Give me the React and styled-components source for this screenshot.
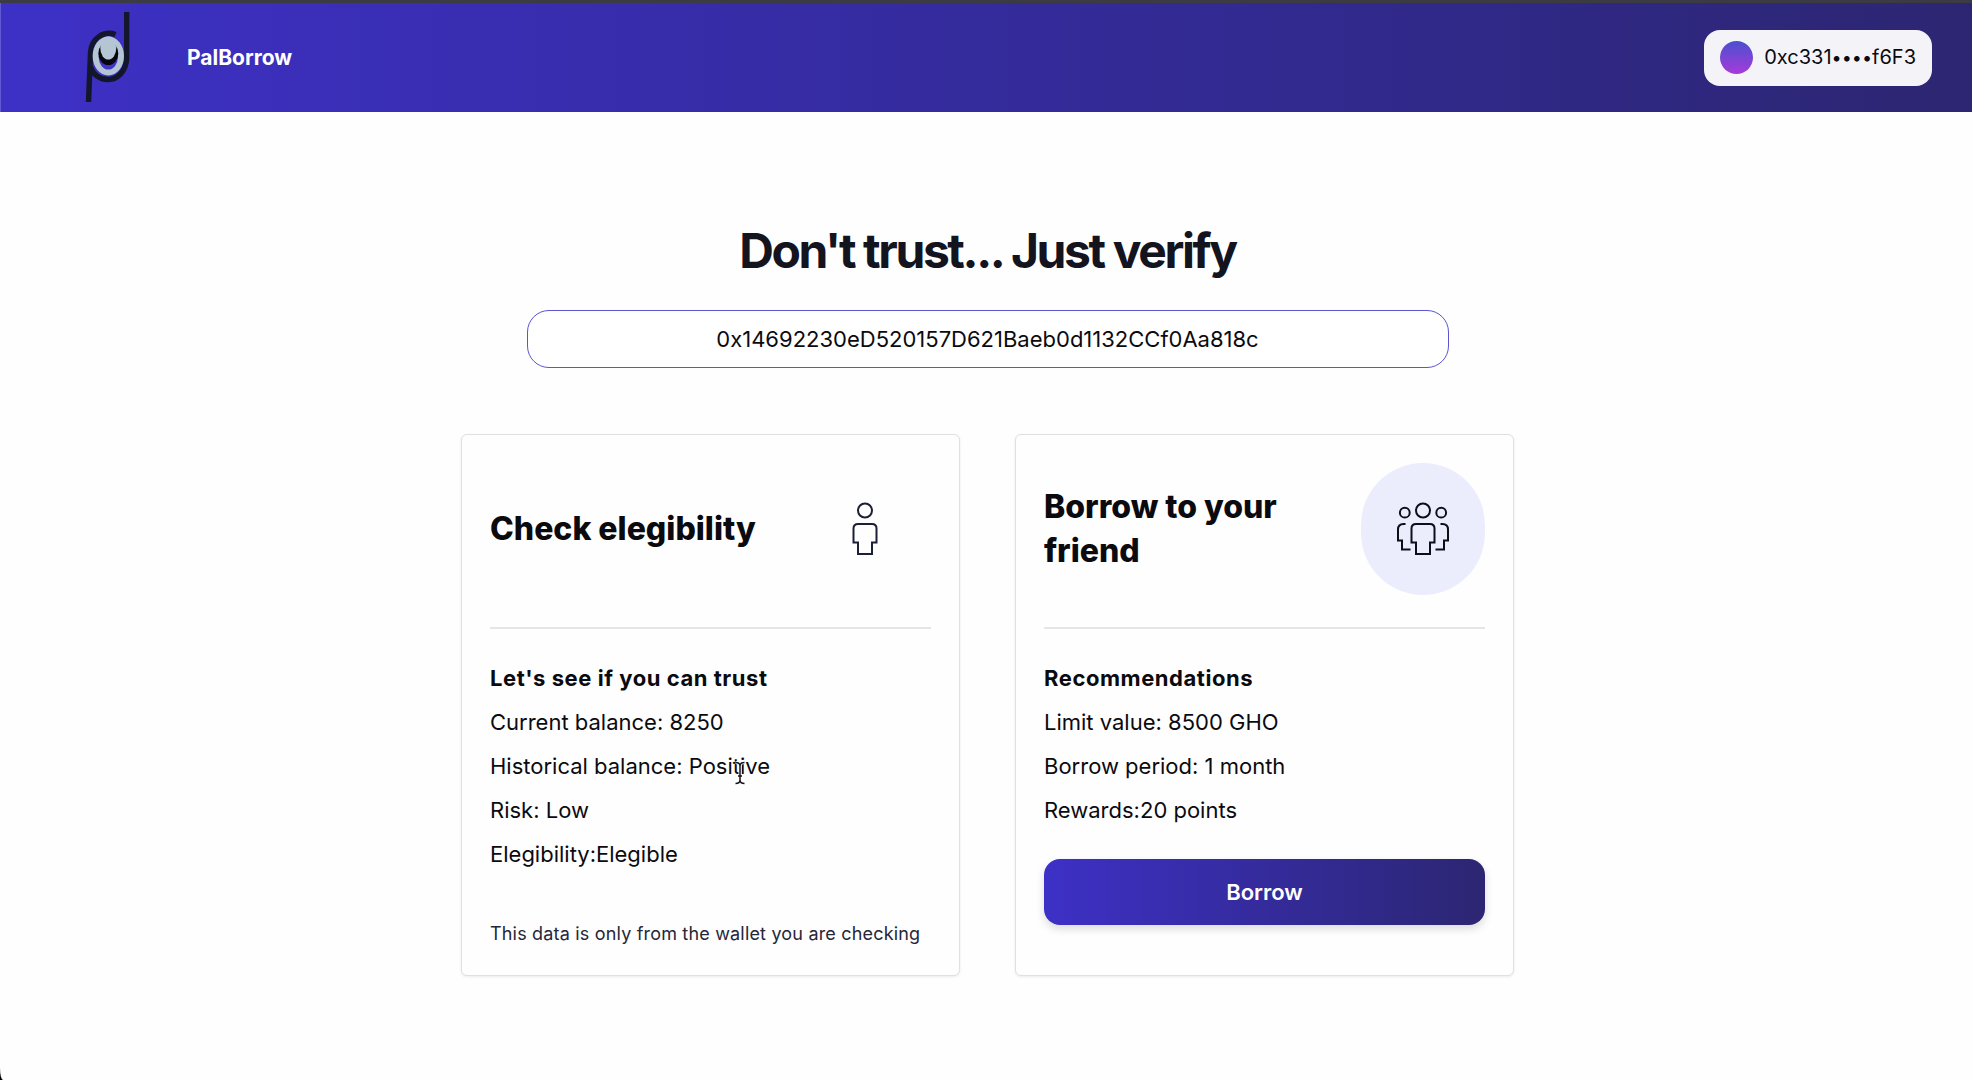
import React, { useState } from "react";
import styled, { createGlobalStyle } from "styled-components";

const GlobalStyle = createGlobalStyle`
  *, *::before, *::after { box-sizing: border-box; }
  html { background: #000; }
  body {
    margin: 0;
    font-family: Inter, "Liberation Sans", sans-serif;
    font-size: 22px;
    line-height: 44px;
    color: #0b0b0f;
  }
  h1, h2, h3, p, ul { margin: 0; padding: 0; }
  button, input { font: inherit; }
`;

const Page = styled.div`
  min-height: 100vh;
  background: #fefefe;
  border-top: 3px solid #3b3b44;
  border-bottom-left-radius: 3px 12px;
`;

const Header = styled.header`
  display: flex;
  align-items: center;
  height: 109px;
  padding: 0 40px 0 70px;
  background: linear-gradient(to right, #3d30c6, #2c2672);
  box-shadow: inset 1px 0 #625ad2;
`;

const Logo = styled.svg`
  display: block;
  width: 80px;
  height: 109px;
`;

const Brand = styled.a`
  margin: 0 auto 0 37px;
  color: #fff;
  font-size: 21px;
  font-weight: 700;
  text-decoration: none;
`;

const Account = styled.button`
  display: flex;
  align-items: center;
  gap: 11px;
  height: 56px;
  padding: 0 16px;
  border: 0;
  border-radius: 16px;
  background: #f4f4f8;
  color: #0b0b0f;
  font-size: 20px;
`;

const Avatar = styled.span`
  width: 33px;
  height: 33px;
  border-radius: 50%;
  background: linear-gradient(#4b4fd0, #a63bd8);
`;

const Mask = styled.span`
  font-size: 18px;
`;

const Main = styled.main`
  display: flex;
  flex-direction: column;
  align-items: center;
  padding: 111px 0 104px 3px;
`;

const Title = styled.h1`
  font-size: 48px;
  line-height: 56px;
  font-weight: 700;
  letter-spacing: -0.05em;
  color: #14141f;
`;

const Address = styled.input`
  width: 100%;
  max-width: 922px;
  height: 58px;
  margin-top: 31px;
  border: 1px solid #5a55d0;
  border-radius: 22px;
  background: #fff;
  color: inherit;
  text-align: center;
  outline: 0;
`;

const Cards = styled.div`
  display: grid;
  grid-template-columns: 1fr 1fr;
  gap: 55px;
  width: 100%;
  max-width: 1053px;
  margin-top: 66px;
`;

const Card = styled.section`
  display: flex;
  flex-direction: column;
  padding: 28px;
  border: 1px solid #e0e0e3;
  border-radius: 6px;
  background: #fefefe;
  box-shadow: 0 1px 3px rgba(0, 0, 0, 0.08);
`;

const CardHead = styled.div`
  display: flex;
  align-items: center;
  justify-content: space-between;
  padding-bottom: 32px;
  margin-bottom: 27px;
  border-bottom: 2px solid #e6e6e9;
`;

const CardTitle = styled.h2`
  font-size: 32px;
  line-height: 44px;
  font-weight: 800;
`;

const IconDisc = styled.div`
  display: flex;
  align-items: center;
  justify-content: center;
  flex: none;
  width: ${(p) => (p.$filled ? 124 : 132)}px;
  height: 132px;
  border-radius: 66px;
  background: ${(p) => (p.$filled ? "#ebedfd" : "transparent")};
`;

const Icon = styled.svg`
  width: 56px;
  height: 56px;
  fill: none;
  stroke: ${(p) => p.$color};
  stroke-width: 2;
`;

const Subtitle = styled.h3`
  font-size: 22px;
  line-height: 44px;
  font-weight: 700;
  letter-spacing: 0.025em;
`;

const Facts = styled.ul`
  list-style: none;
`;

const Fact = styled.li`
  position: relative;
  width: fit-content;
`;

const Pointer = styled.svg`
  position: absolute;
  right: 24px;
  top: 17px;
  width: 12px;
  height: 24px;
  fill: none;
`;

const Note = styled.p`
  margin-top: 45px;
  font-size: 18px;
  line-height: 26px;
  letter-spacing: 0.01em;
  color: #26263a;
`;

const BorrowButton = styled.button`
  height: 66px;
  margin-top: 27px;
  border: 0;
  border-radius: 16px;
  background: linear-gradient(to right, #3d30c6, #2c2672);
  box-shadow: 0 4px 8px rgba(0, 0, 0, 0.14);
  color: #fff;
  font-weight: 600;
`;

const PERSON_BODY = "M16.5 41.5V27.5Q16.5 23 21 23H35Q39.5 23 39.5 27.5V41.5H35V53H21V41.5Z";

function PalLogo() {
  return (
    <Logo viewBox="0 3 80 109" fill="none" aria-hidden="true">
      <path d="M45.5 34.5C34 30.5 21 38 20.5 53L18.5 102" stroke="#14162c" strokeWidth="5.4" />
      <path d="M56.7 12V58C56 71 48 79.5 38 79.5C29 79.5 23 74 20.5 67" stroke="#14162c" strokeWidth="5.4" />
      <ellipse cx="38.3" cy="56" rx="15.7" ry="19.6" fill="#b4c6d4" />
      <ellipse cx="38.3" cy="57" rx="9.6" ry="12.6" fill="#4434c4" />
      <ellipse cx="38.3" cy="53.5" rx="10" ry="11.6" fill="#05060f" />
      <ellipse cx="38.3" cy="48" rx="8" ry="11.5" fill="#b4c6d4" />
    </Logo>
  );
}

function PersonIcon() {
  return (
    <Icon viewBox="0 0 56 56" $color="#1c1f38" aria-hidden="true">
      <circle cx="28" cy="9.5" r="7" />
      <path d={PERSON_BODY} />
    </Icon>
  );
}

function PeopleIcon() {
  return (
    <Icon viewBox="0 0 56 56" $color="#0e0e18" aria-hidden="true">
      <circle cx="28" cy="9.5" r="7" />
      <path d={PERSON_BODY} />
      <circle cx="9.8" cy="11.7" r="4.9" />
      <circle cx="46.2" cy="11.7" r="4.9" />
      <path d="M10.5 23H8.5Q3 23 3 28.5V39.5H7V48.5H15.5" />
      <path d="M45.5 23H47.5Q53 23 53 28.5V39.5H49V48.5H40.5" />
    </Icon>
  );
}

function TextPointer() {
  const shape = "M1.5 1.5Q6 1.5 6 5V19Q6 22.5 1.5 22.5M10.5 1.5Q6 1.5 6 5M6 19Q6 22.5 10.5 22.5M4 15H8";
  return (
    <Pointer viewBox="0 0 12 24" aria-hidden="true">
      <path d={shape} stroke="#fff" strokeWidth="3" />
      <path d={shape} stroke="#15151c" strokeWidth="1.5" />
    </Pointer>
  );
}

export default function App() {
  const [address, setAddress] = useState("0x14692230eD520157D621Baeb0d1132CCf0Aa818c");
  return (
    <>
      <GlobalStyle />
      <Page>
        <Header>
          <PalLogo />
          <Brand href="#">PalBorrow</Brand>
          <Account type="button">
            <Avatar />
            <span>
              0xc331<Mask>••••</Mask>f6F3
            </span>
          </Account>
        </Header>
        <Main>
          <Title>Don't trust... Just verify</Title>
          <Address
            aria-label="Wallet address"
            value={address}
            onChange={(e) => setAddress(e.target.value)}
          />
          <Cards>
            <Card>
              <CardHead>
                <CardTitle>Check elegibility</CardTitle>
                <IconDisc>
                  <PersonIcon />
                </IconDisc>
              </CardHead>
              <Subtitle>Let's see if you can trust</Subtitle>
              <Facts>
                <Fact>Current balance: 8250</Fact>
                <Fact>
                  Historical balance: Positive
                  <TextPointer />
                </Fact>
                <Fact>Risk: Low</Fact>
                <Fact>Elegibility:Elegible</Fact>
              </Facts>
              <Note>This data is only from the wallet you are checking</Note>
            </Card>
            <Card>
              <CardHead>
                <CardTitle>Borrow to your friend</CardTitle>
                <IconDisc $filled>
                  <PeopleIcon />
                </IconDisc>
              </CardHead>
              <Subtitle>Recommendations</Subtitle>
              <Facts>
                <Fact>Limit value: 8500 GHO</Fact>
                <Fact>Borrow period: 1 month</Fact>
                <Fact>Rewards:20 points</Fact>
              </Facts>
              <BorrowButton type="button">Borrow</BorrowButton>
            </Card>
          </Cards>
        </Main>
      </Page>
    </>
  );
}
